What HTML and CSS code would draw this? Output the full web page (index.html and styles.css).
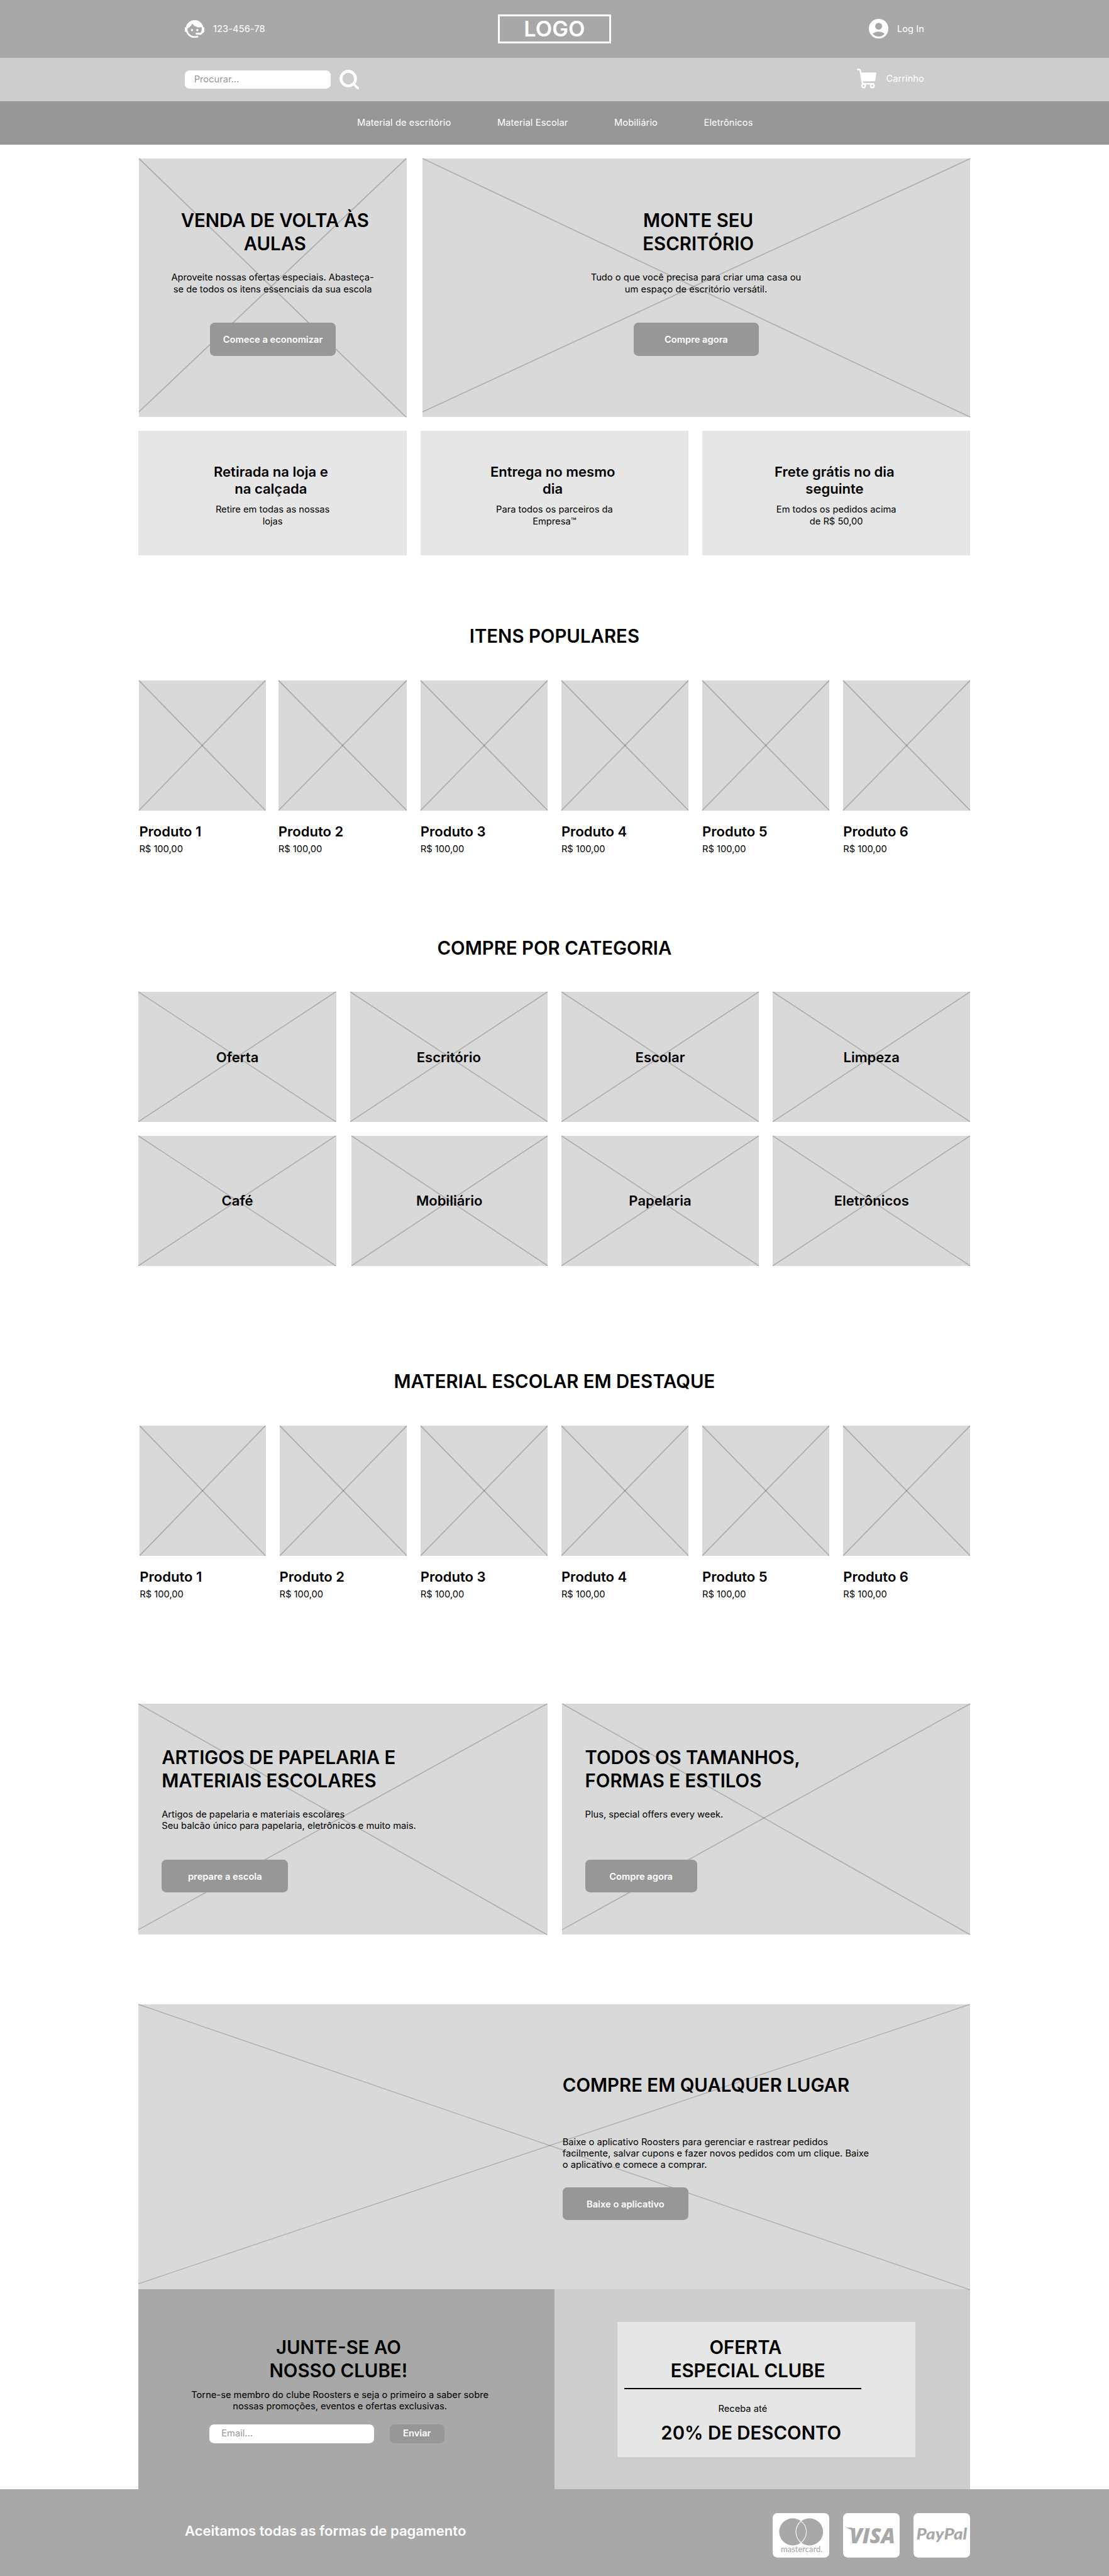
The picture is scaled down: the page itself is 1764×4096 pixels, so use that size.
FILE: index.html
```html
<!DOCTYPE html>
<html lang="pt-BR">
<head>
<meta charset="utf-8">
<title>Loja de material de escritório</title>
<link rel="stylesheet" href="styles.css">
</head>
<body>
<div class="page">
  <header>
    <div class="topbar">
      <div class="contact">
        <svg class="icon-agent" viewBox="2 2.92 20 18.16"><path d="M18.72,14.76C19.07,13.91 19.26,13 19.26,12C19.26,11.28 19.15,10.59 18.96,9.95C18.31,10.1 17.63,10.18 16.92,10.18C13.86,10.18 11.15,8.67 9.5,6.34C8.61,8.5 6.91,10.26 4.77,11.22C4.73,11.47 4.73,11.74 4.73,12A7.27,7.27 0 0,0 12,19.27C13.05,19.27 14.06,19.04 14.97,18.63C15.54,19.72 15.8,20.26 15.78,20.26C14.14,20.81 12.87,21.08 12,21.08C9.58,21.08 7.27,20.13 5.57,18.42C4.53,17.38 3.76,16.11 3.33,14.73H2V10.18H3.09C3.93,6.04 7.6,2.92 12,2.92C14.4,2.92 16.71,3.87 18.42,5.58C19.69,6.84 20.54,8.45 20.89,10.18H22V14.73H21.94L18.38,18L13.08,17.4V15.73H17.91L18.72,14.76M9.27,11.77C9.57,11.77 9.86,11.89 10.07,12.11C10.28,12.32 10.4,12.61 10.4,12.91C10.4,13.21 10.28,13.5 10.07,13.71C9.86,13.92 9.57,14.04 9.27,14.04C8.64,14.04 8.13,13.54 8.13,12.91C8.13,12.28 8.64,11.77 9.27,11.77M14.72,11.77C15.35,11.77 15.85,12.28 15.85,12.91C15.85,13.54 15.35,14.04 14.72,14.04C14.09,14.04 13.58,13.54 13.58,12.91A1.14,1.14 0 0,1 14.72,11.77Z"/></svg>
        <span>123-456-78</span>
      </div>
      <div class="logo">LOGO</div>
      <div class="login">
        <svg class="icon-user" viewBox="2 2 20 20"><path fill-rule="evenodd" d="M12 2a10 10 0 1 0 0 20a10 10 0 1 0 0-20zM12 6a3.5 3.5 0 1 1 0 7a3.5 3.5 0 1 1 0-7zM5.85 17.1q1.275-.975 2.85-1.538T12 15t3.3.562T18.15 17.1A8 8 0 0 1 5.85 17.1z"/></svg>
        <span>Log In</span>
      </div>
    </div>
    <div class="searchbar">
      <div class="search">
        <div class="field search-field">Procurar...</div>
        <svg class="icon-search" viewBox="0 0 34 34"><circle cx="15.2" cy="15.2" r="12.6"/><path d="M25 25l7 7"/></svg>
      </div>
      <div class="cart">
        <svg class="icon-cart" viewBox="0 0 34 34"><path class="basket" d="M6.8 6.7H32.7Q33.7 6.7 33.6 7.8L31.9 20.2Q31.6 22 29.8 22H9z"/><path class="frame" d="M1.3 1.6H4Q5.6 1.6 5.9 3.2L9.9 26.4H28.5"/><circle cx="11.6" cy="30" r="3"/><circle cx="26.8" cy="30" r="3"/></svg>
        <span>Carrinho</span>
      </div>
    </div>
    <nav class="nav">
      <a>Material de escritório</a><a>Material Escolar</a><a>Mobiliário</a><a>Eletrônicos</a>
    </nav>
  </header>

  <main>
    <section class="heroes">
      <article class="hero hero-small">
        <svg class="cross"><line x1="0" y1="0" x2="100%" y2="100%"/><line x1="100%" y1="0" x2="0" y2="97.9%"/></svg>
        <h2>VENDA DE VOLTA ÀS<br>AULAS</h2>
        <p>Aproveite nossas ofertas especiais. Abasteça-<br>se de todos os itens essenciais da sua escola</p>
        <a class="btn">Comece a economizar</a>
      </article>
      <article class="hero hero-wide">
        <svg class="cross thin"><line x1="0" y1="0" x2="100%" y2="100%"/><line x1="100%" y1="0" x2="0" y2="97.9%"/></svg>
        <h2>MONTE SEU<br>ESCRITÓRIO</h2>
        <p>Tudo o que você precisa para criar uma casa ou<br>um espaço de escritório versátil.</p>
        <a class="btn">Compre agora</a>
      </article>
    </section>

    <section class="features">
      <article><h3>Retirada na loja e<br>na calçada</h3><p>Retire em todas as nossas<br>lojas</p></article>
      <article><h3>Entrega no mesmo<br>dia</h3><p>Para todos os parceiros da<br>Empresa™</p></article>
      <article><h3>Frete grátis no dia<br>seguinte</h3><p>Em todos os pedidos acima<br>de R$ 50,00</p></article>
    </section>

    <section class="popular">
      <h2>ITENS POPULARES</h2>
      <div class="products">
        <article><div class="thumb"><svg class="cross"><line x1="0" y1="0" x2="100%" y2="100%"/><line x1="100%" y1="0" x2="0" y2="100%"/></svg></div><h3>Produto 1</h3><p>R$ 100,00</p></article>
        <article><div class="thumb"><svg class="cross"><line x1="0" y1="0" x2="100%" y2="100%"/><line x1="100%" y1="0" x2="0" y2="100%"/></svg></div><h3>Produto 2</h3><p>R$ 100,00</p></article>
        <article><div class="thumb"><svg class="cross"><line x1="0" y1="0" x2="100%" y2="100%"/><line x1="100%" y1="0" x2="0" y2="100%"/></svg></div><h3>Produto 3</h3><p>R$ 100,00</p></article>
        <article><div class="thumb"><svg class="cross"><line x1="0" y1="0" x2="100%" y2="100%"/><line x1="100%" y1="0" x2="0" y2="100%"/></svg></div><h3>Produto 4</h3><p>R$ 100,00</p></article>
        <article><div class="thumb"><svg class="cross"><line x1="0" y1="0" x2="100%" y2="100%"/><line x1="100%" y1="0" x2="0" y2="100%"/></svg></div><h3>Produto 5</h3><p>R$ 100,00</p></article>
        <article><div class="thumb"><svg class="cross"><line x1="0" y1="0" x2="100%" y2="100%"/><line x1="100%" y1="0" x2="0" y2="100%"/></svg></div><h3>Produto 6</h3><p>R$ 100,00</p></article>
      </div>
    </section>

    <section class="categories">
      <h2>COMPRE POR CATEGORIA</h2>
      <div class="category-grid">
        <a><svg class="cross thin"><line x1="0" y1="0" x2="100%" y2="100%"/><line x1="100%" y1="0" x2="0" y2="100%"/></svg><span>Oferta</span></a>
        <a><svg class="cross thin"><line x1="0" y1="0" x2="100%" y2="100%"/><line x1="100%" y1="0" x2="0" y2="100%"/></svg><span>Escritório</span></a>
        <a><svg class="cross thin"><line x1="0" y1="0" x2="100%" y2="100%"/><line x1="100%" y1="0" x2="0" y2="100%"/></svg><span>Escolar</span></a>
        <a><svg class="cross thin"><line x1="0" y1="0" x2="100%" y2="100%"/><line x1="100%" y1="0" x2="0" y2="100%"/></svg><span>Limpeza</span></a>
        <a><svg class="cross thin"><line x1="0" y1="0" x2="100%" y2="100%"/><line x1="100%" y1="0" x2="0" y2="100%"/></svg><span>Café</span></a>
        <a class="inset"><svg class="cross thin"><line x1="0" y1="0" x2="100%" y2="100%"/><line x1="100%" y1="0" x2="0" y2="100%"/></svg><span>Mobiliário</span></a>
        <a><svg class="cross thin"><line x1="0" y1="0" x2="100%" y2="100%"/><line x1="100%" y1="0" x2="0" y2="100%"/></svg><span>Papelaria</span></a>
        <a><svg class="cross thin"><line x1="0" y1="0" x2="100%" y2="100%"/><line x1="100%" y1="0" x2="0" y2="100%"/></svg><span>Eletrônicos</span></a>
      </div>
    </section>

    <section class="featured">
      <h2>MATERIAL ESCOLAR EM DESTAQUE</h2>
      <div class="products">
        <article><div class="thumb"><svg class="cross"><line x1="0" y1="0" x2="100%" y2="100%"/><line x1="100%" y1="0" x2="0" y2="100%"/></svg></div><h3>Produto 1</h3><p>R$ 100,00</p></article>
        <article><div class="thumb"><svg class="cross"><line x1="0" y1="0" x2="100%" y2="100%"/><line x1="100%" y1="0" x2="0" y2="100%"/></svg></div><h3>Produto 2</h3><p>R$ 100,00</p></article>
        <article><div class="thumb"><svg class="cross"><line x1="0" y1="0" x2="100%" y2="100%"/><line x1="100%" y1="0" x2="0" y2="100%"/></svg></div><h3>Produto 3</h3><p>R$ 100,00</p></article>
        <article><div class="thumb"><svg class="cross"><line x1="0" y1="0" x2="100%" y2="100%"/><line x1="100%" y1="0" x2="0" y2="100%"/></svg></div><h3>Produto 4</h3><p>R$ 100,00</p></article>
        <article><div class="thumb"><svg class="cross"><line x1="0" y1="0" x2="100%" y2="100%"/><line x1="100%" y1="0" x2="0" y2="100%"/></svg></div><h3>Produto 5</h3><p>R$ 100,00</p></article>
        <article><div class="thumb"><svg class="cross"><line x1="0" y1="0" x2="100%" y2="100%"/><line x1="100%" y1="0" x2="0" y2="100%"/></svg></div><h3>Produto 6</h3><p>R$ 100,00</p></article>
      </div>
    </section>

    <section class="promos">
      <article class="promo">
        <svg class="cross thin"><line x1="0" y1="0" x2="100%" y2="100%"/><line x1="100%" y1="0" x2="0" y2="97.8%"/></svg>
        <h2>ARTIGOS DE PAPELARIA E<br>MATERIAIS ESCOLARES</h2>
        <p>Artigos de papelaria e materiais escolares<br>Seu balcão único para papelaria, eletrônicos e muito mais.</p>
        <a class="btn">prepare a escola</a>
      </article>
      <article class="promo">
        <svg class="cross thin"><line x1="0" y1="0" x2="100%" y2="100%"/><line x1="100%" y1="0" x2="0" y2="97.8%"/></svg>
        <h2>TODOS OS TAMANHOS,<br>FORMAS E ESTILOS</h2>
        <p>Plus, special offers every week.</p>
        <a class="btn btn-narrow">Compre agora</a>
      </article>
    </section>

    <section class="app">
      <svg class="cross hair"><line x1="0" y1="0" x2="100%" y2="100%"/><line x1="100%" y1="0" x2="0" y2="97.9%"/></svg>
      <h2>COMPRE EM QUALQUER LUGAR</h2>
      <p>Baixe o aplicativo Roosters para gerenciar e rastrear pedidos<br>facilmente, salvar cupons e fazer novos pedidos com um clique. Baixe<br>o aplicativo e comece a comprar.</p>
      <a class="btn">Baixe o aplicativo</a>
    </section>

    <section class="club">
      <div class="join">
        <h2>JUNTE-SE AO<br>NOSSO CLUBE!</h2>
        <p>Torne-se membro do clube Roosters e seja o primeiro a saber sobre<br>nossas promoções, eventos e ofertas exclusivas.</p>
        <div class="signup">
          <div class="field email-field">Email...</div>
          <a class="btn btn-send">Enviar</a>
        </div>
      </div>
      <div class="offer">
        <div class="offer-card">
          <h2><span class="offer-lead">OFERTA</span>ESPECIAL CLUBE</h2>
          <hr>
          <p>Receba até</p>
          <h2 class="discount">20% DE DESCONTO</h2>
        </div>
      </div>
    </section>
  </main>

  <footer>
    <h3>Aceitamos todas as formas de pagamento</h3>
    <div class="cards">
      <svg viewBox="0 0 98 77"><rect width="98" height="77" rx="8" class="plate"/>
        <circle cx="34.8" cy="32.5" r="23.5"/><circle cx="63.8" cy="32.5" r="23.5"/>
        <path class="lens" d="M49.3 14A23.5 23.5 0 0 1 49.3 51A23.5 23.5 0 0 1 49.3 14z"/>
        <text class="mc" x="14.3" y="68" textLength="72" lengthAdjust="spacingAndGlyphs">mastercard.</text></svg>
      <svg viewBox="0 0 98 77"><rect width="98" height="77" rx="8" class="plate"/>
        <path d="M5.4 25.6V25H15L17.5 32Q13 27.200 5.400 25.600z"/>
        <text class="visa" x="11.5" y="52" textLength="78.5" lengthAdjust="spacingAndGlyphs">VISA</text></svg>
      <svg viewBox="0 0 98 77"><rect width="98" height="77" rx="8" class="plate"/>
        <text class="paypal" x="5" y="46" textLength="88" lengthAdjust="spacingAndGlyphs">PayPal</text></svg>
    </div>
  </footer>
</div>
</body>
</html>
```
FILE: styles.css
```css
html { overflow: hidden; background: #fff; }
body { margin: 0; }

.page {
  width: 1920px;
  height: 4459px;
  zoom: 0.91865;
  background: #fff;
  color: #000;
  font-family: Inter, "Liberation Sans", sans-serif;
  font-size: 16px;
  line-height: 20px;
}

h2, h3, p { margin: 0; white-space: nowrap; }
h2 { font-size: 32px; line-height: 40px; font-weight: 600; padding-top: 1px; margin-bottom: -1px; }
h3 { font-size: 24px; line-height: 30px; font-weight: 600; padding-top: 0.8px; margin-bottom: -0.8px; }
svg { display: block; flex: none; }

/* Header */
.topbar, .searchbar { display: flex; align-items: center; justify-content: space-between; padding: 0 320px; color: #fff; fill: #fff; }
.topbar { height: 100px; background: #a8a8a8; display: grid; grid-template-columns: 1fr auto 1fr; }
.searchbar { height: 75px; background: #cdcdcd; }
.contact, .login, .search, .cart { display: flex; align-items: center; }
.contact { gap: 15px; }
.contact span { letter-spacing: 0.1px; }
.login { justify-content: flex-end; gap: 15px; }
.logo { box-sizing: border-box; width: 196px; height: 50px; border: 3.3px solid #fff; font-size: 37.5px; line-height: 43px; font-weight: 600; text-align: center; }
.icon-agent { width: 34px; height: 31px; }
.icon-user, .icon-search, .icon-cart { width: 34px; height: 34px; }
.icon-search { fill: none; stroke: #fff; stroke-width: 5; stroke-linecap: round; }
.icon-search path { stroke-width: 4; }
.search { gap: 15px; }
.cart { gap: 17px; padding-bottom: 3px; }
.icon-cart .frame, .icon-cart circle { fill: none; stroke: #fff; stroke-width: 2.6; stroke-linecap: round; }
.field { box-sizing: border-box; height: 32px; border-radius: 8px; background: #fff; color: #979797; line-height: 32px; }
.search-field { width: 253px; padding-left: 16px; }
.nav { height: 75px; display: flex; align-items: center; justify-content: center; gap: 80px; padding-left: 2px; background: #979797; color: #fff; letter-spacing: 0.1px; }

main { width: 1440px; margin: 0 auto; padding-top: 24px; }

.cross { position: absolute; inset: 0; width: 100%; height: 100%; overflow: visible; stroke: rgba(0, 0, 0, 0.2); stroke-width: 2; }
.cross.thin { stroke-width: 1.8; }
.cross.hair { stroke-width: 1.5; }

.btn { display: block; box-sizing: border-box; width: 217px; height: 57px; padding-top: 1px; line-height: 57px; border-radius: 8px; background: #979797; color: #fff; font-weight: 600; text-align: center; }

/* Heroes */
.heroes { display: flex; justify-content: space-between; padding-left: 1px; }
.hero { position: relative; box-sizing: border-box; height: 448px; padding-top: 88px; display: flex; flex-direction: column; align-items: center; text-align: center; background: #d9d9d9; }
.hero-small { width: 463px; }
.hero-wide { width: 949px; }
.hero > :not(.cross), .promo > :not(.cross), .app > :not(.cross) { position: relative; }
.hero h2 { padding-left: 7px; }
.hero p { margin: 28.5px 0 48.5px; padding-right: 1px; }

/* Delivery features */
.features { display: grid; grid-template-columns: repeat(3, 1fr); gap: 24px; margin-top: 24px; }
.features article { box-sizing: border-box; height: 215px; padding-top: 55px; text-align: center; background: #e6e6e6; }
.features h3 { padding-right: 6px; }
.features p { margin-top: 11.5px; }

/* Products */
.popular, .categories, .featured { text-align: center; }
.popular { margin-top: 120.5px; }
.products { display: grid; grid-template-columns: repeat(6, 1fr); gap: 24px; margin-top: 56.5px; text-align: left; }
.thumb { position: relative; height: 225px; background: #d9d9d9; }
.products h3 { margin-top: 21px; }
.products p { margin-top: 5.5px; }
.popular article:nth-child(1) { margin-left: 1px; }
.popular article:nth-child(2) { margin-left: -2px; }
.featured article:nth-child(1) { margin-left: 2px; }

/* Categories */
.categories { margin-top: 141.5px; }
.category-grid { display: grid; grid-template-columns: repeat(4, 1fr); gap: 24px; margin-top: 56px; }
.category-grid a { position: relative; height: 225px; display: flex; align-items: center; justify-content: center; background: #d9d9d9; font-size: 24px; line-height: 30px; font-weight: 600; }
.category-grid .inset { margin-left: 2px; }
.category-grid span { position: relative; padding-top: 2px; }
.featured { margin-top: 180.5px; }

/* Promos */
.promos { display: grid; grid-template-columns: 708px 707px; justify-content: space-between; margin-top: 179.5px; }
.promo { position: relative; box-sizing: border-box; height: 400px; padding: 73.5px 0 0 40px; background: #d9d9d9; }
.promo p { height: 40px; margin: 28px 0 48.5px; }
.promo .btn { width: 219px; }
.promo .btn-narrow { width: 194px; }

/* App */
.app { position: relative; box-sizing: border-box; height: 494px; margin-top: 120px; padding: 120.5px 0 0 734px; background: #d9d9d9; }
.app p { margin: 68px 0 28.5px; }
.app .btn { width: 218px; }

/* Club */
.club { display: grid; grid-template-columns: 1fr 1fr; height: 346px; }
.join { padding-top: 80.5px; background: #a8a8a8; text-align: center; }
.join h2 { padding-right: 28px; }
.join p { margin-top: 12px; padding-right: 23px; }
.signup { display: flex; gap: 27px; margin: 21.5px 0 0 122.5px; }
.email-field { width: 285px; padding-left: 21px; text-align: left; }
.btn-send { width: 95px; height: 32px; padding-top: 0; line-height: 32px; }
.offer { padding: 56px 0 0 109px; background: #cdcdcd; }
.offer-card { box-sizing: border-box; width: 516px; height: 234px; padding: 24.5px 94px 0 12px; background: #e6e6e6; text-align: center; }
.offer-card h2 { padding-left: 18px; }
.offer-lead { display: block; padding-right: 8px; }
.offer-card hr { width: 410px; height: 2.2px; margin: 9.5px 0 24.3px; border: 0; background: #000; }
.offer-card h2.discount { margin-top: 12px; padding-left: 29px; }

/* Footer */
footer { box-sizing: border-box; height: 150px; padding: 0 240px 0 320px; display: flex; align-items: center; justify-content: space-between; background: #a8a8a8; color: #fff; }
footer h3 { padding-bottom: 6px; }
.cards { display: flex; gap: 24px; padding-top: 9px; }
.cards svg { width: 98px; height: 77px; fill: #a8a8a8; }
.cards .plate { fill: #fff; }
.cards .lens { fill: #a8a8a8; stroke: #fff; stroke-width: 1.2; }
.mc { font: 500 14px Lato, sans-serif; }
.visa { font: italic 800 37px "Open Sans", sans-serif; }
.paypal { font: italic 900 26px Lato, sans-serif; }
```
